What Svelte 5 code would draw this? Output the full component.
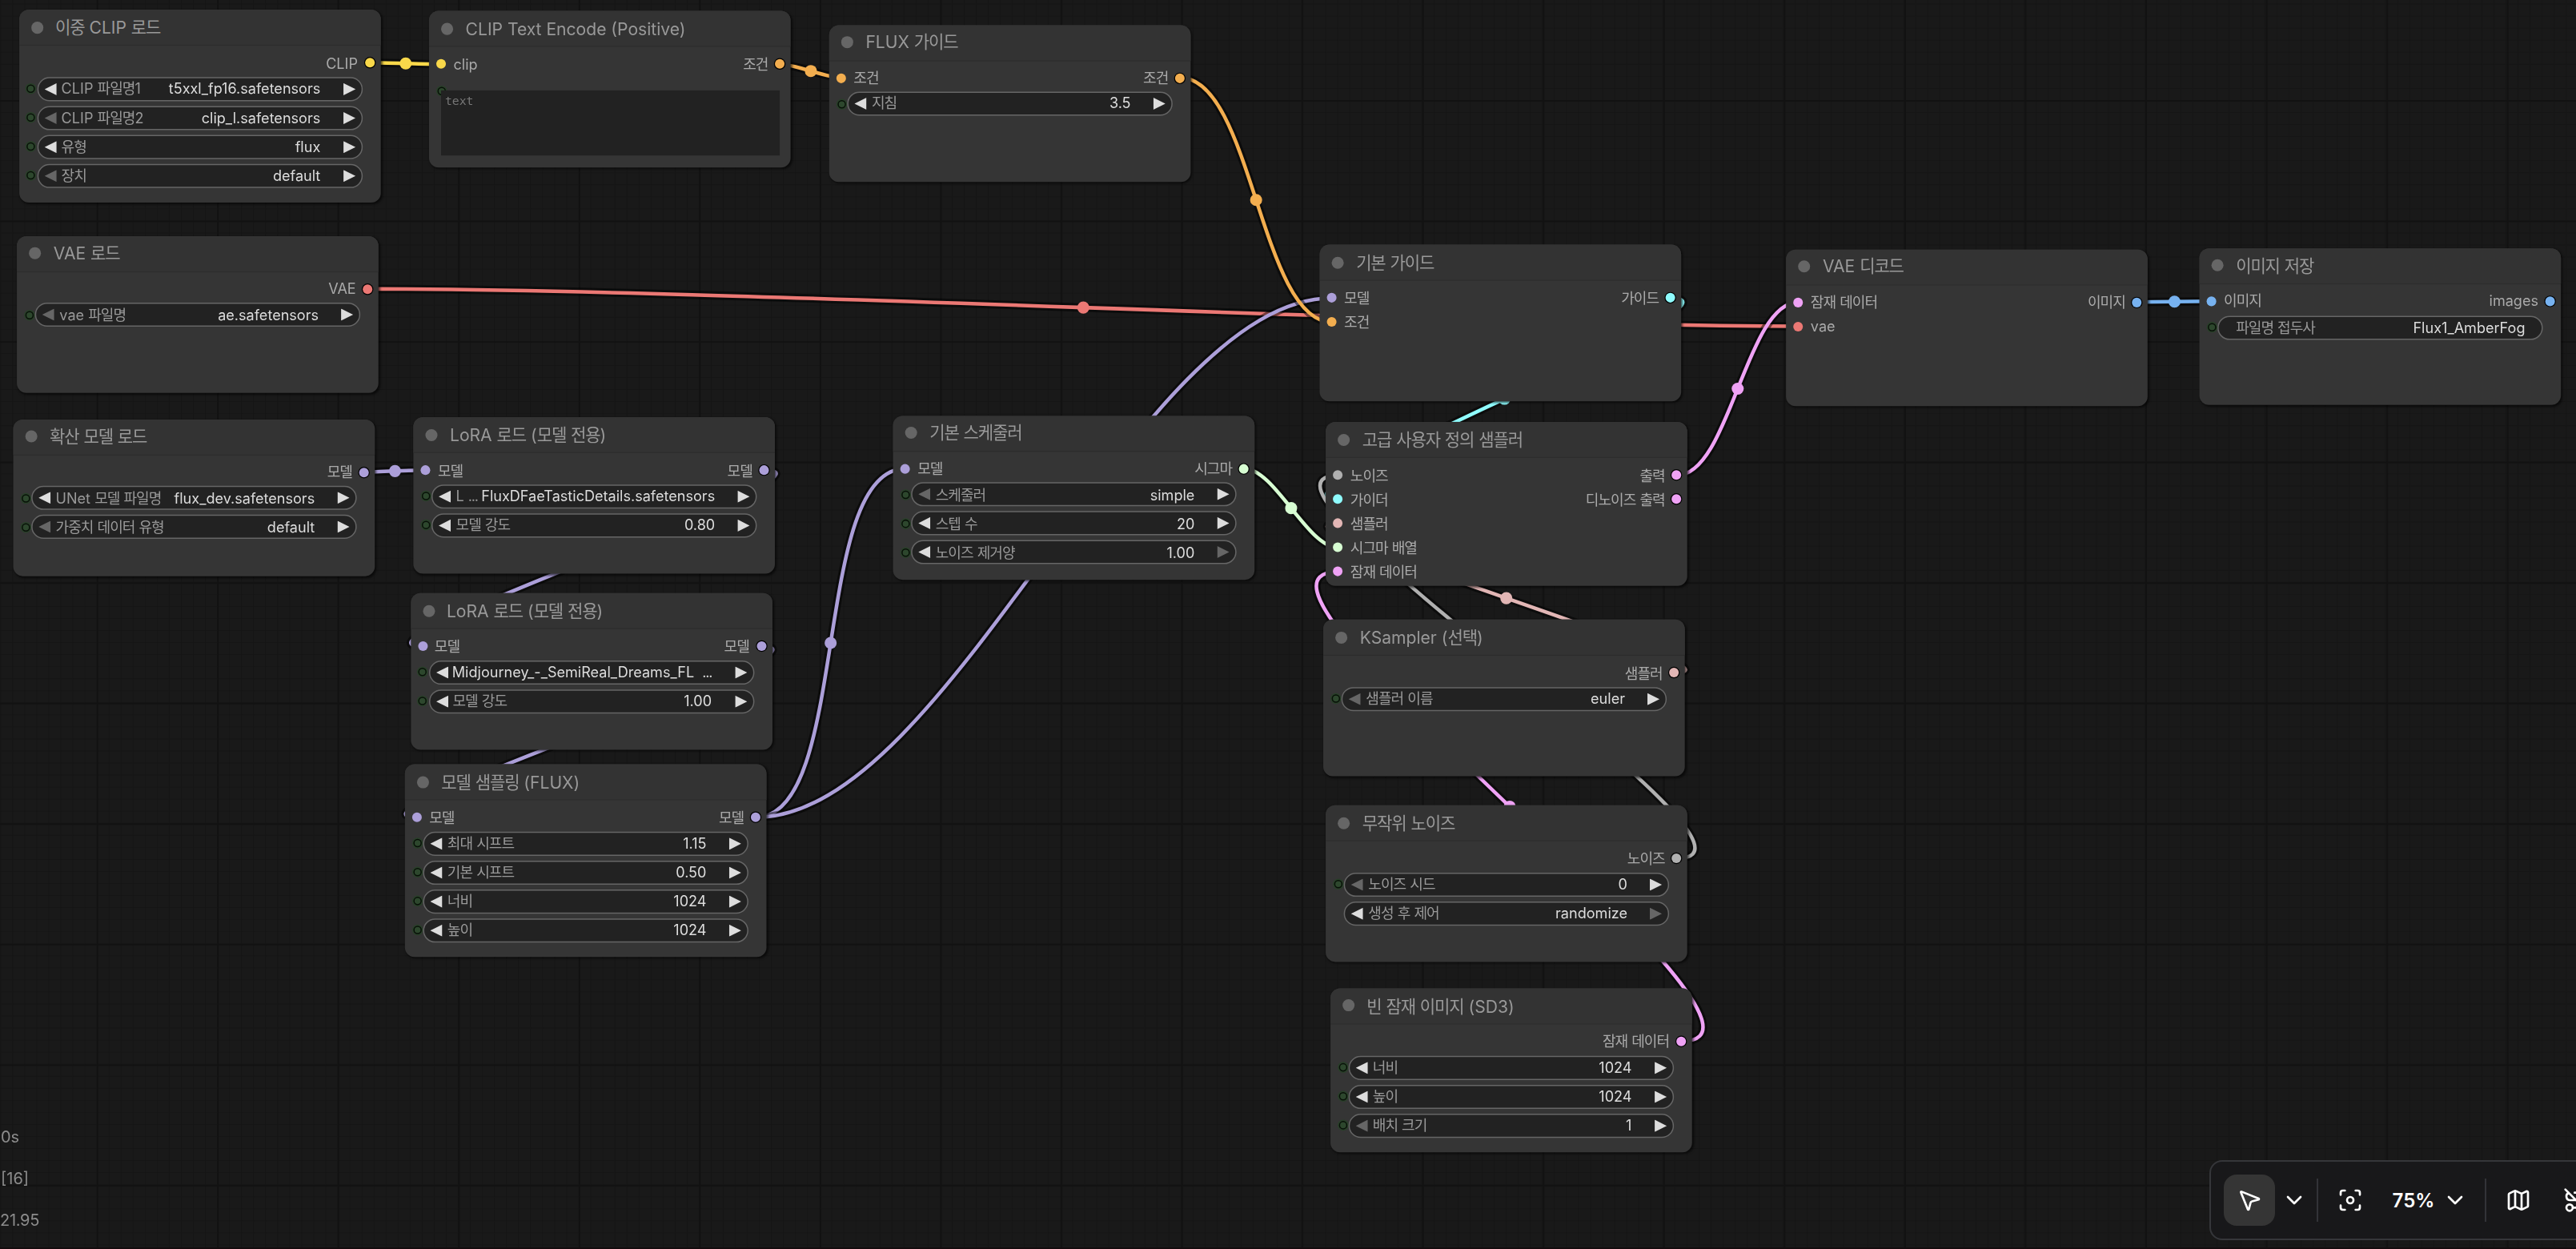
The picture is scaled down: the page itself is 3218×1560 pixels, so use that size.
<script>
    const TITLE_HEIGHT = 30;
    const SLOT_HEIGHT = 20;
    const NODE_WIDTH = 300;

    const colors = {
        clip: "#f9d84a",
        cond: "#f3ae4f",
        vae: "#eb7874",
        model: "#ac9fd9",
        sigmas: "#d7fdd2",
        guider: "#8ffcfe",
        noise: "#b0b0b0",
        sampler: "#e2b6b5",
        latent: "#efa2f5",
        image: "#77b2f0",
    };

    // widget: [label, value, left arrow enabled, right arrow enabled]
    const nodes = [
        {
            id: "dualclip", title: "이중 CLIP 로드", x: 15.9, y: 8, h: 160,
            outputs: [["CLIP", "clip"]],
            widgets: [
                ["CLIP 파일명1", "t5xxl_fp16.safetensors", true, true],
                ["CLIP 파일명2", "clip_l.safetensors", false, true],
                ["유형", "flux", true, true],
                ["장치", "default", false, true],
            ],
        },
        {
            id: "encode", title: "CLIP Text Encode (Positive)", x: 356.3, y: 9.3, h: 130,
            inputs: [["clip", "clip"]],
            outputs: [["조건", "cond"]],
            textarea: "text",
        },
        {
            id: "guidance", title: "FLUX 가이드", x: 688.3, y: 20.5, h: 130,
            inputs: [["조건", "cond"]],
            outputs: [["조건", "cond"]],
            widgets: [["지침", "3.5", true, true]],
        },
        {
            id: "vaeload", title: "VAE 로드", x: 14.4, y: 195.7, h: 130,
            outputs: [["VAE", "vae"]],
            widgets: [["vae 파일명", "ae.safetensors", false, true]],
        },
        {
            id: "unet", title: "확산 모델 로드", x: 11.2, y: 347.6, h: 130,
            outputs: [["모델", "model"]],
            widgets: [
                ["UNet 모델 파일명", "flux_dev.safetensors", true, true],
                ["가중치 데이터 유형", "default", false, true],
            ],
        },
        {
            id: "lora1", title: "LoRA 로드 (모델 전용)", x: 343.3, y: 346, h: 130,
            inputs: [["모델", "model"]],
            outputs: [["모델", "model"]],
            widgets: [
                ["L ...", "FluxDFaeTasticDetails.safetensors", true, true],
                ["모델 강도", "0.80", true, true],
            ],
        },
        {
            id: "lora2", title: "LoRA 로드 (모델 전용)", x: 340.6, y: 492.2, h: 130,
            inputs: [["모델", "model"]],
            outputs: [["모델", "model"]],
            widgets: [
                ["", "Midjourney_-_SemiReal_Dreams_FL  ...", true, true],
                ["모델 강도", "1.00", true, true],
            ],
        },
        {
            id: "sampling", title: "모델 샘플링 (FLUX)", x: 336.2, y: 634.1, h: 160,
            inputs: [["모델", "model"]],
            outputs: [["모델", "model"]],
            widgets: [
                ["최대 시프트", "1.15", true, true],
                ["기본 시프트", "0.50", true, true],
                ["너비", "1024", true, true],
                ["높이", "1024", true, true],
            ],
        },
        {
            id: "scheduler", title: "기본 스케줄러", x: 741.3, y: 344.7, h: 136,
            inputs: [["모델", "model"]],
            outputs: [["시그마", "sigmas"]],
            widgets: [
                ["스케줄러", "simple", false, true],
                ["스텝 수", "20", true, true],
                ["노이즈 제거양", "1.00", true, false],
            ],
        },
        {
            id: "guider", title: "기본 가이드", x: 1095.3, y: 203.3, h: 130,
            inputs: [["모델", "model"], ["조건", "cond"]],
            outputs: [["가이드", "guider"]],
        },
        {
            id: "custom", title: "고급 사용자 정의 샘플러", x: 1100.4, y: 350.4, h: 136,
            inputs: [
                ["노이즈", "noise"],
                ["가이더", "guider"],
                ["샘플러", "sampler"],
                ["시그마 배열", "sigmas"],
                ["잠재 데이터", "latent"],
            ],
            outputs: [["출력", "latent"], ["디노이즈 출력", "latent"]],
        },
        {
            id: "ksampler", title: "KSampler (선택)", x: 1098.4, y: 514.1, h: 130,
            outputs: [["샘플러", "sampler"]],
            widgets: [["샘플러 이름", "euler", false, true]],
        },
        {
            id: "noise", title: "무작위 노이즈", x: 1100.4, y: 668.1, h: 130,
            outputs: [["노이즈", "noise"]],
            widgets: [
                ["노이즈 시드", "0", false, true],
                ["생성 후 제어", "randomize", true, false, "nosocket"],
            ],
        },
        {
            id: "empty", title: "빈 잠재 이미지 (SD3)", x: 1104, y: 819.9, h: 136,
            outputs: [["잠재 데이터", "latent"]],
            widgets: [
                ["너비", "1024", true, true],
                ["높이", "1024", true, true],
                ["배치 크기", "1", false, true],
            ],
        },
        {
            id: "decode", title: "VAE 디코드", x: 1482.4, y: 206.6, h: 130,
            inputs: [["잠재 데이터", "latent"], ["vae", "vae"]],
            outputs: [["이미지", "image"]],
        },
        {
            id: "save", title: "이미지 저장", x: 1825.3, y: 205.9, h: 130,
            inputs: [["이미지", "image"]],
            outputs: [["images", "image"]],
            widgets: [["파일명 접두사", "Flux1_AmberFog", null, null]],
        },
    ];

    // [from node, output index, to node, input index, type]
    const connections = [
        ["vaeload", 0, "decode", 1, "vae"],
        ["dualclip", 0, "encode", 0, "clip"],
        ["encode", 0, "guidance", 0, "cond"],
        ["unet", 0, "lora1", 0, "model"],
        ["lora1", 0, "lora2", 0, "model"],
        ["lora2", 0, "sampling", 0, "model"],
        ["sampling", 0, "scheduler", 0, "model"],
        ["sampling", 0, "guider", 0, "model"],
        ["guidance", 0, "guider", 1, "cond"],
        ["guider", 0, "custom", 1, "guider"],
        ["ksampler", 0, "custom", 2, "sampler"],
        ["noise", 0, "custom", 0, "noise"],
        ["scheduler", 0, "custom", 3, "sigmas"],
        ["empty", 0, "custom", 4, "latent"],
        ["custom", 0, "decode", 0, "latent"],
        ["decode", 0, "save", 0, "image"],
    ];

    const byId = Object.fromEntries(nodes.map((n) => [n.id, n]));

    function slotY(node, index) {
        return node.y + TITLE_HEIGHT + 14 + index * SLOT_HEIGHT;
    }

    // hangul and ellipses are tracked tighter than latin text
    function runs(str) {
        return str.split(/([가-힣]+|\.\.\.)/).filter(Boolean);
    }

    const links = connections.map(([from, out, to, inp, type]) => {
        const x1 = byId[from].x + NODE_WIDTH - 9;
        const y1 = slotY(byId[from], out);
        const x2 = byId[to].x + 10;
        const y2 = slotY(byId[to], inp);
        const bend = Math.hypot(x2 - x1, y2 - y1) * 0.25;
        return {
            d: `M${x1} ${y1} C${x1 + bend} ${y1} ${x2 - bend} ${y2} ${x2} ${y2}`,
            cx: (x1 + x2) / 2,
            cy: (y1 + y2) / 2,
            color: colors[type],
        };
    });
</script>

{#snippet arrow(side, on)}
    <svg class="arrow" class:off={!on} viewBox="0 0 10 10">
        <path d={side === "left" ? "M10 0 L0 5 L10 10 Z" : "M0 0 L10 5 L0 10 Z"} />
    </svg>
{/snippet}

{#snippet text(str)}{#each runs(str) as run}<b class:hangul={/[가-힣]/.test(run)} class:ellipsis={run === "..."}>{run}</b>{/each}{/snippet}

{#snippet chevron()}
    <svg class="icon" viewBox="0 0 24 24"><path d="m6 9 6 6 6-6" /></svg>
{/snippet}

<main>
    <div class="graph">
        <svg class="links" width="2140" height="1040">
            {#each links as link}
                <path class="shade" d={link.d} />
                <path class="wire" d={link.d} stroke={link.color} />
                <circle cx={link.cx} cy={link.cy} r="5" fill={link.color} />
            {/each}
        </svg>

        {#each nodes as node}
            <section class="node" style="left: {node.x}px; top: {node.y}px; height: {node.h}px">
                <header>
                    <i class="dot"></i>
                    <span>{@render text(node.title)}</span>
                </header>
                <div class="slots">
                    <div class="inputs">
                        {#each node.inputs ?? [] as [name, type]}
                            <div class="slot">
                                <i style="background: {colors[type]}"></i>
                                <span>{@render text(name)}</span>
                            </div>
                        {/each}
                    </div>
                    <div class="outputs">
                        {#each node.outputs as [name, type]}
                            <div class="slot">
                                <span>{@render text(name)}</span>
                                <i class="ring" style="background: {colors[type]}"></i>
                            </div>
                        {/each}
                    </div>
                </div>
                {#if node.textarea}
                    <div class="multiline">
                        <i class="socket"></i>
                        <div class="textbox">{node.textarea}</div>
                    </div>
                {/if}
                {#each node.widgets ?? [] as [label, value, left, right, extra]}
                    <div class="widget">
                        <i class="socket" class:hidden={extra === "nosocket"}></i>
                        <div class="pill" class:plain={left === null}>
                            {#if left !== null}{@render arrow("left", left)}{/if}
                            <span class="label">{@render text(label)}</span>
                            <span class="value">{@render text(value)}</span>
                            {#if right !== null}{@render arrow("right", right)}{/if}
                        </div>
                    </div>
                {/each}
            </section>
        {/each}
    </div>

    <div class="stats">
        <span>0s</span>
        <span>[16]</span>
        <span>21.95</span>
    </div>

    <nav class="toolbar">
        <button class="tool active" aria-label="Select">
            <svg class="icon" viewBox="0 0 24 24">
                <path d="M4.037 4.688a.495.495 0 0 1 .651-.651l16 6.5a.5.5 0 0 1-.063.947l-6.124 1.58a2 2 0 0 0-1.438 1.435l-1.579 6.126a.5.5 0 0 1-.947.063z" />
            </svg>
        </button>
        <button class="drop" aria-label="Modes">{@render chevron()}</button>
        <hr />
        <button class="tool" aria-label="Fit view">
            <svg class="icon" viewBox="0 0 24 24">
                <circle cx="12" cy="12" r="3" />
                <path d="M3 7V5a2 2 0 0 1 2-2h2M17 3h2a2 2 0 0 1 2 2v2M21 17v2a2 2 0 0 1-2 2h-2M7 21H5a2 2 0 0 1-2-2v-2" />
            </svg>
        </button>
        <button class="zoom"><span>75%</span>{@render chevron()}</button>
        <hr />
        <button class="tool" aria-label="Minimap">
            <svg class="icon" viewBox="0 0 24 24">
                <path d="M14.106 5.553a2 2 0 0 0 1.788 0l3.659-1.83A1 1 0 0 1 21 4.619v12.764a1 1 0 0 1-.553.894l-4.553 2.277a2 2 0 0 1-1.788 0l-4.212-2.106a2 2 0 0 0-1.788 0l-3.659 1.83A1 1 0 0 1 3 19.381V6.618a1 1 0 0 1 .553-.894l4.553-2.277a2 2 0 0 1 1.788 0zM15 5.764v15M9 3.236v15" />
            </svg>
        </button>
        <button class="tool" aria-label="Hide links">
            <svg class="icon" viewBox="0 0 24 24">
                <circle cx="6" cy="19" r="3" />
                <path d="M9 19h8.5c.4 0 .9-.1 1.3-.2M5.2 5.2A3.5 3.53 0 0 0 6.5 12H12M2 2l20 20M21 15.3a3.5 3.5 0 0 0-3.3-3.3M15 5h-4.3" />
                <circle cx="18" cy="5" r="3" />
            </svg>
        </button>
    </nav>
</main>

<style>
    :global(body) {
        margin: 0;
        overflow: hidden;
    }

    main {
        position: relative;
        width: 3218px;
        height: 1560px;
        overflow: hidden;
        box-sizing: border-box;
        border-bottom: 2px solid #130c0e;
        font-family: Inter, "Noto Sans CJK KR", sans-serif;
        background-color: #191919;
        background-image:
            linear-gradient(90deg, #121212 2px, transparent 2px),
            linear-gradient(#121212 2px, transparent 2px),
            linear-gradient(90deg, #151515 1px, transparent 1px),
            linear-gradient(#151515 1px, transparent 1px);
        background-size:
            150.55px 150.55px,
            150.55px 150.55px,
            15.055px 15.055px,
            15.055px 15.055px;
        background-position: -29.8px -25.5px;
    }

    /* everything in the graph is sized in canvas units */
    .graph {
        position: absolute;
        left: 0;
        top: 0;
        transform: scale(1.5055);
        transform-origin: 0 0;
    }

    .links {
        position: absolute;
        left: 0;
        top: 0;
        fill: none;
    }

    .shade {
        stroke: rgba(0, 0, 0, 0.5);
        stroke-width: 7;
    }

    .wire {
        stroke-width: 3;
    }

    .node {
        position: absolute;
        width: 300px;
        box-sizing: border-box;
        border-radius: 8px;
        background: #353535;
        box-shadow: 1px 1px 2px rgba(0, 0, 0, 0.6);
    }

    b {
        font-weight: inherit;
    }

    .hangul {
        letter-spacing: -0.055em;
    }

    .ellipsis {
        letter-spacing: -0.07em;
    }

    header {
        display: flex;
        align-items: center;
        gap: 10px;
        height: 30px;
        padding-left: 10px;
        box-sizing: border-box;
        border-radius: 8px 8px 0 0;
        border-bottom: 1px solid #2d2d2d;
        background: #333;
        color: #999;
        font-size: 14px;
        line-height: 20px;
        white-space: nowrap;
    }

    header span {
        position: relative;
        top: 0.3px;
    }

    .dot {
        width: 10px;
        height: 10px;
        border-radius: 50%;
        background: #666;
    }

    .slots {
        display: flex;
        justify-content: space-between;
        padding: 4px 5px 1.8px 6px;
        color: #aaa;
        font-size: 12px;
        line-height: 20px;
        white-space: nowrap;
    }

    .slot {
        display: flex;
        align-items: center;
        gap: 6px;
        height: 20px;
    }

    .slot i {
        width: 8px;
        height: 8px;
        border-radius: 50%;
    }

    .slot i.ring {
        box-shadow: 0 0 0 0.8px #000;
    }

    .outputs .slot {
        justify-content: flex-end;
    }

    .slot span {
        position: relative;
        top: 0.6px;
    }

    .socket {
        flex: none;
        width: 7px;
        height: 7px;
        box-sizing: border-box;
        border: 1px solid #081008;
        border-radius: 50%;
        background: #2d472d;
        box-shadow: 0 0 0 1px rgba(34, 72, 34, 0.6);
    }

    .hidden {
        visibility: hidden;
    }

    .widget {
        display: flex;
        align-items: center;
        gap: 1.5px;
        height: 20px;
        margin-bottom: 4px;
        padding-left: 6.5px;
    }

    .pill {
        display: flex;
        align-items: center;
        width: 270px;
        height: 20px;
        box-sizing: border-box;
        padding: 0 5px;
        border: 1px solid #666;
        border-radius: 10px;
        background: #222;
        font-size: 12px;
        line-height: 17px;
        white-space: pre;
    }

    .pill.plain {
        padding: 0 14px 0 10px;
    }

    .label,
    .value {
        position: relative;
        top: -0.4px;
    }

    .label {
        margin-left: 4px;
        color: #999;
    }

    .value {
        margin-left: auto;
        margin-right: 19px;
        color: #ddd;
    }

    /* a value without a label takes the label's place */
    .label:empty {
        margin-left: 3px;
    }

    .plain .value {
        margin-right: 0;
    }

    .arrow {
        flex: none;
        width: 10px;
        height: 10px;
        fill: #ddd;
    }

    .arrow.off {
        fill: #666;
    }

    .multiline {
        display: flex;
        align-items: flex-start;
        padding: 7px 9.5px 0 6.5px;
    }

    .multiline .socket {
        margin: 0 -3.5px 0 0;
        position: relative;
        top: -0.5px;
    }

    .textbox {
        position: relative;
        flex: 1;
        height: 54px;
        margin-top: 3px;
        box-sizing: border-box;
        padding: 2.5px 3px;
        background: #222;
        color: #777;
        font: 9.8px/1.3 "DejaVu Sans Mono", monospace;
    }

    .stats {
        position: absolute;
        left: 0;
        top: 1394px;
        display: flex;
        flex-direction: column;
        color: #8c8c8c;
        font-size: 20px;
        line-height: 52px;
    }

    .stats span {
        padding-left: 1px;
    }

    .stats span:last-child {
        padding-left: 0;
        letter-spacing: -0.3px;
    }

    .toolbar {
        position: absolute;
        left: 2760px;
        top: 1449px;
        display: flex;
        align-items: center;
        width: 560px;
        height: 100px;
        box-sizing: border-box;
        padding: 0 16px;
        border: 2px solid #35363a;
        border-radius: 16px;
        background: #18181a;
    }

    button {
        display: flex;
        flex: none;
        align-items: center;
        justify-content: center;
        padding: 0;
        border: 0;
        border-radius: 16px;
        background: none;
        color: #fff;
        font: 600 24px Inter, sans-serif;
    }

    .tool {
        width: 64px;
        height: 64px;
    }

    .tool + .tool {
        margin-left: 8px;
    }

    .active {
        background: #353535;
    }

    .drop {
        margin: 0 4px 0 8px;
    }

    .zoom {
        gap: 10px;
        width: 120px;
        height: 64px;
        margin-left: 8px;
    }

    hr {
        flex: none;
        width: 2px;
        height: 54px;
        margin: 0 8px;
        border: 0;
        background: #323338;
    }

    .icon {
        width: 32px;
        height: 32px;
        fill: none;
        stroke: currentColor;
        stroke-width: 2;
        stroke-linecap: round;
        stroke-linejoin: round;
    }
</style>
